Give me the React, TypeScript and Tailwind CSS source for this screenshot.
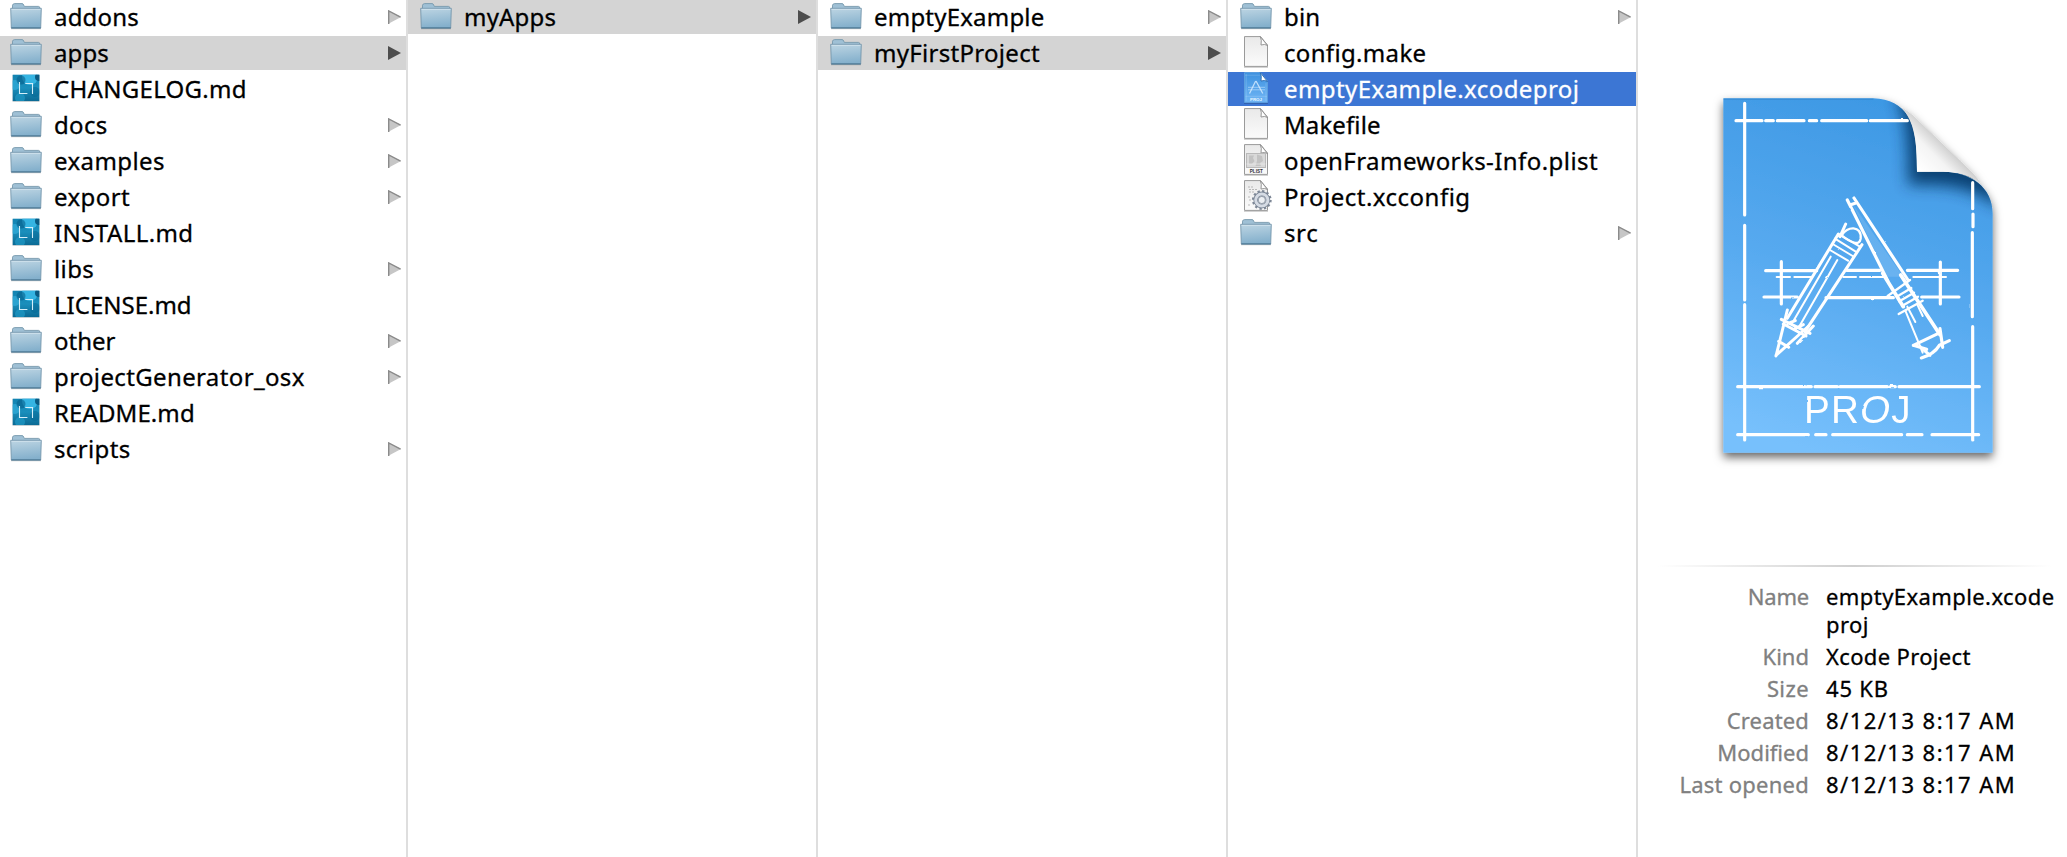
import { useId } from "react";

type Kind = "folder" | "markdown" | "blank" | "project" | "plist" | "config";
type Item = { name: string; kind: Kind; tracking?: string; selected?: "muted" | "active" };

const columns: Item[][] = [
  [
    { name: "addons", kind: "folder", tracking: "tracking-[0.2px]" },
    { name: "apps", kind: "folder", selected: "muted", tracking: "tracking-[0.1px]" },
    { name: "CHANGELOG.md", kind: "markdown", tracking: "tracking-[0.3px]" },
    { name: "docs", kind: "folder", tracking: "tracking-[0.3px]" },
    { name: "examples", kind: "folder", tracking: "tracking-[0.4px]" },
    { name: "export", kind: "folder", tracking: "tracking-[0.4px]" },
    { name: "INSTALL.md", kind: "markdown", tracking: "tracking-[0.42px]" },
    { name: "libs", kind: "folder", tracking: "tracking-[0.4px]" },
    { name: "LICENSE.md", kind: "markdown" },
    { name: "other", kind: "folder" },
    { name: "projectGenerator_osx", kind: "folder", tracking: "tracking-[0.37px]" },
    { name: "README.md", kind: "markdown", tracking: "tracking-[0.1px]" },
    { name: "scripts", kind: "folder", tracking: "tracking-[0.35px]" },
  ],
  [{ name: "myApps", kind: "folder", selected: "muted", tracking: "tracking-[0.2px]" }],
  [
    { name: "emptyExample", kind: "folder", tracking: "tracking-[0.2px]" },
    { name: "myFirstProject", kind: "folder", selected: "muted", tracking: "tracking-[0.3px]" },
  ],
  [
    { name: "bin", kind: "folder", tracking: "tracking-[0.2px]" },
    { name: "config.make", kind: "blank", tracking: "tracking-[0.33px]" },
    { name: "emptyExample.xcodeproj", kind: "project", selected: "active", tracking: "tracking-[0.43px]" },
    { name: "Makefile", kind: "blank", tracking: "tracking-[0.1px]" },
    { name: "openFrameworks-Info.plist", kind: "plist", tracking: "tracking-[0.43px]" },
    { name: "Project.xcconfig", kind: "config", tracking: "tracking-[0.5px]" },
    { name: "src", kind: "folder", tracking: "tracking-[0.6px]" },
  ],
];

const details: { label: string; value: string; labelTracking?: string; tracking?: string }[] = [
  { label: "Name", value: "emptyExample.xcode\nproj", labelTracking: "tracking-[-0.2px]", tracking: "tracking-[0.42px]" },
  { label: "Kind", value: "Xcode Project", tracking: "tracking-[0.35px]" },
  { label: "Size", value: "45 KB", labelTracking: "tracking-[0.4px]", tracking: "tracking-[0.8px]" },
  { label: "Created", value: "8/12/13 8:17 AM", labelTracking: "tracking-[0.15px]", tracking: "tracking-[1.45px]" },
  { label: "Modified", value: "8/12/13 8:17 AM", tracking: "tracking-[1.45px]" },
  { label: "Last opened", value: "8/12/13 8:17 AM", labelTracking: "tracking-[0.25px]", tracking: "tracking-[1.45px]" },
];

function FolderIcon() {
  const id = useId();
  return (
    <svg viewBox="0 0 32 34" className="h-[34px] w-8">
      <defs>
        <linearGradient id={id} x1="0" y1="0" x2="0.15" y2="1">
          <stop offset="0" stopColor="#bdd5e3" />
          <stop offset="1" stopColor="#84b0cc" />
        </linearGradient>
      </defs>
      <path d="M1 28.7H31" stroke="#000" strokeOpacity=".25" strokeWidth="1" />
      <path d="M2.5 9V5.2Q3 3.6 4.5 3.6H12Q13.2 3.6 13.7 5L14.3 6.4H28.5Q29.8 6.4 29.8 8V10H2.5Z" fill="#9fc0d5" stroke="#7798ad" strokeWidth=".9" />
      <path d="M.7 8.3H31.3L30.7 28H1.3Z" fill={`url(#${id})`} stroke="#7596ab" strokeWidth=".9" />
      <path d="M1.5 9.4H30.5" stroke="#d3e4ee" strokeWidth=".8" />
      <path d="M1.3 27.9H30.7" stroke="#4a7795" strokeWidth="1.1" />
    </svg>
  );
}

function MarkdownIcon() {
  const id = useId();
  return (
    <svg viewBox="0 0 32 34" className="h-[34px] w-8">
      <defs>
        <linearGradient id={id} x1="0" y1="0" x2="0" y2="1">
          <stop offset="0" stopColor="#1283b1" />
          <stop offset=".5" stopColor="#1a8fbc" />
          <stop offset="1" stopColor="#0b6a94" />
        </linearGradient>
        <clipPath id={`${id}c`}>
          <rect x="2.7" y="2.7" width="26.6" height="26.4" />
        </clipPath>
      </defs>
      <rect x="2.5" y="3" width="27" height="26.8" fill="#000" opacity=".18" />
      <rect x="2.7" y="2.7" width="26.6" height="26.4" fill={`url(#${id})`} />
      <g clipPath={`url(#${id}c)`}>
        <circle cx="20" cy="5" r="8" fill="#35b4e2" />
        <circle cx="5" cy="13" r="5" fill="#2fa9d6" opacity=".8" />
        <circle cx="29" cy="5" r="4" fill="#0a5b83" />
        <circle cx="11" cy="8" r="4.5" fill="#075f8b" opacity=".6" />
        <circle cx="25" cy="20" r="5" fill="#056592" opacity=".5" />
        <circle cx="10" cy="26" r="5" fill="#209ac6" opacity=".7" />
      </g>
      <path d="M9.5 10V21.5H17.4M15.3 11.5H22.5V22" fill="none" stroke="#d5effa" strokeWidth="1.1" />
    </svg>
  );
}

function SheetIcon({ kind }: { kind: Kind }) {
  const id = useId();
  const blue = kind === "project";
  return (
    <svg viewBox="0 0 32 34" className="h-[34px] w-8">
      <defs>
        <linearGradient id={id} x1="0" y1="0" x2="0" y2="1">
          <stop offset="0" stopColor={blue ? "#3d91df" : "#e9e9e9"} />
          <stop offset="1" stopColor={blue ? "#70b6f5" : "#fbfbfb"} />
        </linearGradient>
      </defs>
      <path d="M4 31.2H28" stroke="#000" strokeOpacity=".25" />
      <path d="M4.5 .6H20.5L27.5 9V30.4H4.5Z" fill={`url(#${id})`} stroke={blue ? "#5c9fdf" : "#9a9a9a"} />
      <path d="M20.3 .6Q22 4 21 9Q25 7.6 27.6 9.6Z" fill="#fff" stroke={blue ? "#2b69ae" : "#8c8c8c"} strokeWidth=".9" />
      {kind === "project" && (
        <g fill="none" stroke="#d9edff">
          <path d="M6.2 2V29M26 11V29M5 3.2H20M5.5 24.3H27" strokeOpacity=".3" strokeWidth=".7" />
          <path d="M15.7 9L9.5 21.5M16 9L22.8 21.5" strokeWidth="1.3" strokeOpacity=".8" />
          <path d="M8 15.3H25M8 17.8H25" strokeWidth=".8" strokeOpacity=".65" />
          <text x="16" y="28.8" textAnchor="middle" fontSize="4.4" fontWeight="700" fontFamily="Liberation Sans, sans-serif" fill="#eaf6ff" stroke="none">PROJ</text>
        </g>
      )}
      {kind === "plist" && (
        <g>
          <rect x="6.5" y="9.5" width="19" height="14" fill="#d9d9d9" stroke="#b9b9b9" />
          <path d="M9 11.5H14L13 14L14.5 17L12 20H9ZM17 10.5L22 12L23 17L20 19L21 22H15.5L17 17Z" fill="#c2c2c2" />
          <path d="M6.5 20H25.5" stroke="#ececec" strokeWidth=".7" />
          <text x="16.3" y="28.9" textAnchor="middle" fontSize="4.6" fontWeight="700" fontFamily="Liberation Sans, sans-serif" fill="#333">PLIST</text>
        </g>
      )}
      {kind === "config" && (
        <g>
          <path d="M8 7H13M9 9.5H17M9 12H15M8 17H11M9 20H11M8 25H11" stroke="#aaa" strokeWidth=".8" strokeDasharray="2 1" />
          <circle cx="21.8" cy="20" r="8.4" fill="none" stroke="#7d8796" strokeWidth="3" strokeDasharray="2.2 2.2" />
          <circle cx="21.8" cy="20" r="6.1" fill="none" stroke="#7b8696" strokeWidth="4.6" />
          <circle cx="21.8" cy="20" r="6.1" fill="none" stroke="#d5dbe4" strokeWidth="3" />
          <circle cx="21.8" cy="20" r="3.6" fill="#eceff3" stroke="#7b8696" strokeWidth=".8" />
        </g>
      )}
    </svg>
  );
}

function Icon({ kind }: { kind: Kind }) {
  if (kind === "folder") return <FolderIcon />;
  if (kind === "markdown") return <MarkdownIcon />;
  return <SheetIcon kind={kind} />;
}

function Arrow({ dark }: { dark: boolean }) {
  return (
    <svg viewBox="0 0 13 14" className="h-3.5 w-[13px]">
      {dark ? (
        <path d="M0 0L13 7L0 14Z" fill="#4d4d4d" />
      ) : (
        <>
          <path d="M0 0L13 7L0 14Z" fill="#c6c6c6" />
          <path d="M.7 14V1L12.6 7.2" fill="none" stroke="#8b8b8b" strokeWidth="1.4" />
        </>
      )}
    </svg>
  );
}

function Row({ item, inset }: { item: Item; inset: string }) {
  const tone =
    item.selected === "active" ? "bg-[#3c76d4] text-white" : item.selected === "muted" ? "bg-[#d4d4d4] text-black" : "text-black";
  return (
    <div className={`flex h-[34px] items-center pr-[5px] ${inset} ${tone}`}>
      <Icon kind={item.kind} />
      <span className={`ml-3 flex-1 text-2xl leading-[34px] whitespace-nowrap ${item.tracking ?? ""}`}>{item.name}</span>
      {item.kind === "folder" && <Arrow dark={item.selected === "muted"} />}
    </div>
  );
}

const sheetPath = "M70 55H520C570 57 602 76 624 108C643 138 651 180 651 275H730C810 277 878 320 878 400V1118H70Z";
const curlPath = "M604 82C616 90 628 98 640 108L790 252C812 273 828 288 842 310C815 285 775 275 730 275H651C651 180 643 125 604 82Z";

function ProjectArtwork() {
  return (
    <svg viewBox="0 0 930 1200" className="h-[400px] w-[310px]">
      <defs>
        <linearGradient id="paper" x1="0.6" y1="0" x2="0.35" y2="1">
          <stop offset="0" stopColor="#3d98e4" />
          <stop offset=".5" stopColor="#56a9ef" />
          <stop offset="1" stopColor="#77c0fc" />
        </linearGradient>
        <linearGradient id="curl" x1="655" y1="265" x2="735" y2="185" gradientUnits="userSpaceOnUse">
          <stop offset="0" stopColor="#ffffff" />
          <stop offset=".55" stopColor="#f4f4f4" />
          <stop offset="1" stopColor="#c9c9c9" />
        </linearGradient>
        <filter id="lift" x="-20%" y="-20%" width="140%" height="140%">
          <feDropShadow dx="0" dy="14" stdDeviation="14" floodColor="#000" floodOpacity=".6" />
        </filter>
        <filter id="soft" x="300" y="-200" width="900" height="900" filterUnits="userSpaceOnUse">
          <feGaussianBlur stdDeviation="22" />
        </filter>
        <filter id="chalk" x="-5%" y="-5%" width="110%" height="110%">
          <feTurbulence type="fractalNoise" baseFrequency=".03" numOctaves="2" seed="4" />
          <feDisplacementMap in="SourceGraphic" scale="5" xChannelSelector="R" yChannelSelector="G" />
        </filter>
        <clipPath id="sheet">
          <path d={sheetPath} />
        </clipPath>
      </defs>
      <g filter="url(#lift)">
        <path d={sheetPath} fill="url(#paper)" />
        <path d={curlPath} fill="url(#curl)" />
      </g>
      <g clipPath="url(#sheet)">
        <path d="M590 50C625 120 625 230 625 315C730 312 820 320 900 385V150H690V20Z" fill="#06305e" opacity=".85" filter="url(#soft)" />
        <path d="M70 57H520" stroke="#2f7fc4" strokeWidth="4" opacity=".6" />
      </g>
      <path d={curlPath} fill="url(#curl)" />
      <g fill="none" stroke="#fff" strokeWidth="9.5" strokeLinecap="round" filter="url(#chalk)">
        <path d="M108 122H186M197 122H220M232 122H312M328 122H350M365 122H500M511 122H622" />
        <path d="M134 70V405M134 436V660M134 674V1080" />
        <path d="M818 308V386M819 402V440M817 458V710M818 740V1080" />
        <path d="M113 920H315M322 920H334M345 920H412M420 920H562M571 920H586M597 920H838" />
        <path d="M113 1064H325M347 1064H378M398 1064H605M622 1064H666M696 1064H836" />
        <path d="M197 572H350M440 571H540M622 571H773M192 651H292M378 653H580M665 651H777" />
        <path d="M230 591H270M283 591H332M430 591H468M480 591H552M640 591H738" strokeWidth="6" />
        <path d="M244 545V672M721 546V672" />
        <g strokeWidth="9">
          <path d="M415 462L262 715M486 494L315 755M437 432L420 470" />
          <path d="M425 466C440 438 486 435 482 476C479 500 450 486 425 466" strokeWidth="7" />
          <path d="M392 530L282 720M412 540L300 736" strokeWidth="6" />
          <path d="M414 462L480 500M405 476L466 514M398 492L458 528M390 510L444 542" strokeWidth="6" />
          <path d="M262 690L240 780L228 828M326 738L228 826M244 718L330 760M250 732L318 768M236 784L266 802M264 730L286 722M286 745L310 734M340 738L292 790" />
        </g>
        <g strokeWidth="9.5">
          <path d="M442 360L563 602M462 354L624 600M452 374L470 368" />
          <path d="M548 580L610 680M602 585L720 764" strokeWidth="11" />
          <path d="M616 692L668 818M652 674L668 708M622 680L646 726" strokeWidth="6" />
          <path d="M563 648L630 600M590 650L634 624M598 664L642 638M606 678L654 650M596 702L668 662" strokeWidth="7" />
          <path d="M640 796L720 758M640 796L680 808M720 746L728 802M748 782L718 796C706 816 690 826 664 834M660 800L690 826" />
        </g>
        <path d="M458 372L560 590H610Z" fill="#fff" fillOpacity=".12" stroke="none" />
      </g>
      <g filter="url(#chalk)">
        <text x="312" y="1028" fontSize="116" fontFamily="Liberation Sans, sans-serif" fill="#fff" textLength="320" lengthAdjust="spacing">
          PR<tspan fontStyle="italic">O</tspan>J
        </text>
      </g>
    </svg>
  );
}

export default function App() {
  return (
    <main className="flex h-[857px] w-[2067px] overflow-hidden bg-white font-['Noto_Sans',sans-serif] [-webkit-text-stroke:0.3px_currentColor]">
      {columns.map((items, index) => (
        <section key={index} className={`flex shrink-0 flex-col gap-0.5 border-r-2 border-[#dedede] ${index === 0 ? "w-[408px]" : "w-[410px]"}`}>
          {items.map((item) => (
            <Row key={item.name} item={item} inset={index === 0 ? "pl-2.5" : "pl-3"} />
          ))}
        </section>
      ))}
      <aside className="flex flex-1 flex-col pt-20">
        <div className="pl-[62px]">
          <ProjectArtwork />
        </div>
        <div className="mt-[85px] mr-4 ml-5 h-0.5 bg-linear-to-r from-transparent via-[#cfcfcf] to-transparent" />
        <dl className="mt-[15px] flex flex-col gap-1 text-[22px] leading-7">
          {details.map((row) => (
            <div key={row.label} className="flex gap-[17px]">
              <dt className={`w-[171px] text-right whitespace-nowrap text-[#808080] ${row.labelTracking ?? ""}`}>{row.label}</dt>
              <dd className={`whitespace-pre text-black ${row.tracking ?? ""}`}>{row.value}</dd>
            </div>
          ))}
        </dl>
      </aside>
    </main>
  );
}
